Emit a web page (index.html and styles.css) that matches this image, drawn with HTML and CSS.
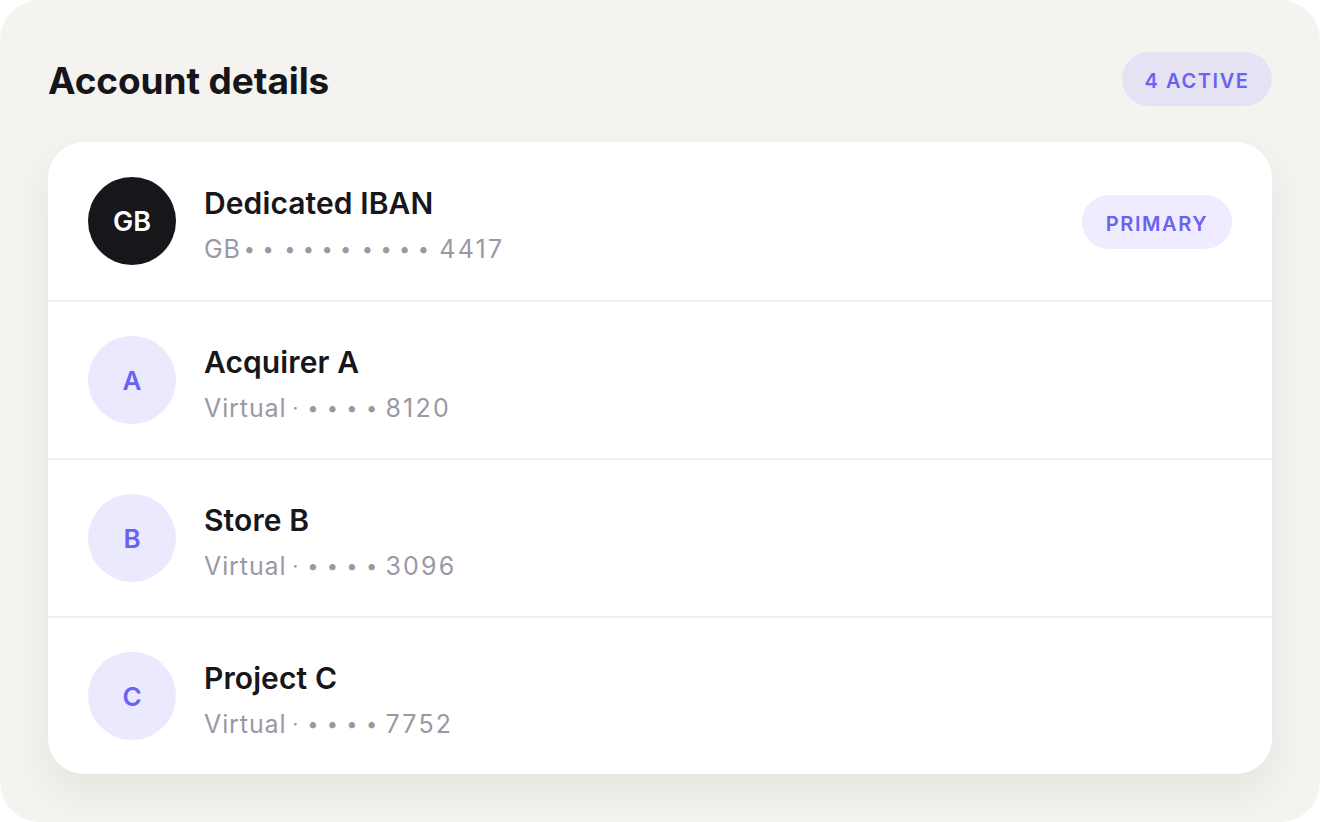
FILE: index.html
```html
<!DOCTYPE html>
<html>
<head>
<meta charset="utf-8">
<link rel="stylesheet" href="styles.css">
</head>
<body>
<div class="panel">
  <div class="header">
    <h1 class="title">Account details</h1>
    <span class="badge badge-count">4 ACTIVE</span>
  </div>
  <div class="card">
    <div class="row">
      <div class="avatar avatar-dark">GB</div>
      <div class="info">
        <div class="name">Dedicated IBAN</div>
        <div class="sub">GB<span class="dots dots-iban dots-lead">••</span><span class="dots dots-iban dots-group">••••</span><span class="dots dots-iban dots-group">••••</span><span class="num num-iban">4417</span></div>
      </div>
      <span class="badge badge-primary">PRIMARY</span>
    </div>
    <div class="row">
      <div class="avatar">A</div>
      <div class="info">
        <div class="name">Acquirer A</div>
        <div class="sub">Virtual<span class="sep">·</span><span class="dots">••••</span><span class="num">8120</span></div>
      </div>
    </div>
    <div class="row">
      <div class="avatar">B</div>
      <div class="info">
        <div class="name">Store B</div>
        <div class="sub">Virtual<span class="sep">·</span><span class="dots">••••</span><span class="num">3096</span></div>
      </div>
    </div>
    <div class="row">
      <div class="avatar">C</div>
      <div class="info">
        <div class="name">Project C</div>
        <div class="sub">Virtual<span class="sep">·</span><span class="dots">••••</span><span class="num">7752</span></div>
      </div>
    </div>
  </div>
</div>
</body>
</html>
```

FILE: styles.css
```css
html, body {
  margin: 0;
  padding: 0;
  background: #ffffff;
}
body {
  font-family: Inter, "Noto Sans", "Liberation Sans", sans-serif;
  color: #16161b;
}
.panel {
  width: 1320px;
  height: 822px;
  box-sizing: border-box;
  background: #f4f3ef;
  border-radius: 40px;
  padding: 52px 48px 0 48px;
}
.header {
  display: flex;
  align-items: center;
  justify-content: space-between;
  height: 54px;
  margin-bottom: 36px;
}
.title {
  margin: 0;
  padding-top: 3px;
  font-size: 37px;
  font-weight: 700;
  letter-spacing: -0.1px;
  color: #15151a;
}
.badge {
  display: inline-flex;
  align-items: center;
  justify-content: center;
  box-sizing: border-box;
  width: 150px;
  height: 54px;
  padding-top: 3px;
  border-radius: 27px;
  font-size: 20px;
  font-weight: 600;
  letter-spacing: 1.6px;
  color: #6a62f2;
}
.badge-count {
  background: #e5e3f3;
}
.badge-primary {
  background: #eeecfe;
  margin-top: 2px;
}
.card {
  background: #ffffff;
  border-radius: 36px;
  box-shadow: 0 18px 44px rgba(40, 35, 20, 0.07);
  overflow: hidden;
}
.row {
  display: flex;
  align-items: center;
  height: 158px;
  box-sizing: border-box;
  padding: 0 40px;
  border-top: 2px solid #f1f0ee;
}
.row:first-child {
  border-top: none;
}
.avatar {
  flex: none;
  width: 88px;
  height: 88px;
  border-radius: 50%;
  background: #ebe9fe;
  color: #6a62f2;
  display: flex;
  align-items: center;
  justify-content: center;
  font-size: 26px;
  font-weight: 600;
}
.avatar-dark {
  background: #16161b;
  color: #ffffff;
  font-size: 27px;
  font-weight: 600;
  letter-spacing: 0;
}
.info {
  flex: 1;
  margin-left: 28px;
  display: flex;
  flex-direction: column;
  gap: 13px;
  padding-top: 7px;
}
.name {
  font-size: 30px;
  font-weight: 600;
  letter-spacing: 0.1px;
  line-height: 36px;
  color: #16161b;
}
.sub {
  font-size: 25px;
  line-height: 30px;
  color: #9a99a3;
  letter-spacing: 0.9px;
  display: flex;
  align-items: center;
}
.dots {
  font-size: 20px;
  letter-spacing: 8.3px;
}
.dots-iban {
  letter-spacing: 7.4px;
}
.dots-lead {
  margin-left: 3px;
  margin-right: 3px;
}
.dots-group {
  margin-right: 3px;
}
.num {
  letter-spacing: 2.2px;
}
.num-iban {
  margin-left: 0;
}
.sep {
  font-size: 20px;
  letter-spacing: 0;
  margin: 0 9px 0 6px;
}
```
